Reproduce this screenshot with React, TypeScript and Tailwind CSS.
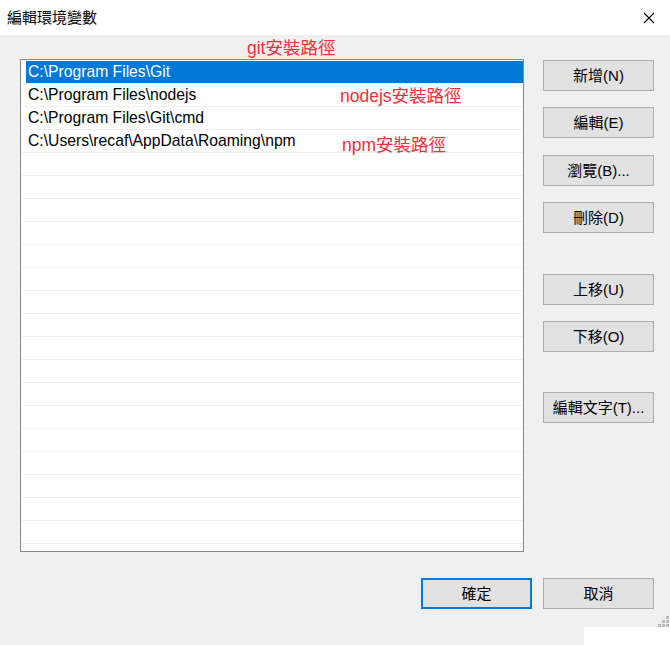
import React from "react";

const rows = [
  "C:\\Program Files\\Git",
  "C:\\Program Files\\nodejs",
  "C:\\Program Files\\Git\\cmd",
  "C:\\Users\\recaf\\AppData\\Roaming\\npm",
];

function Btn({
  label,
  className = "",
  primary = false,
}: {
  label: string;
  className?: string;
  primary?: boolean;
}) {
  return (
    <button
      className={
        (primary
          ? "border-2 border-[#0078d7] "
          : "border border-[#adadad] ") +
        "w-[111px] h-[31px] bg-[#e1e1e1] text-[15px] text-black flex items-center justify-center leading-none " +
        className
      }
    >
      {label}
    </button>
  );
}

export default function App() {
  const total = 21;
  return (
    <div className="relative w-[670px] h-[645px] bg-[#f0f0f0] flex flex-col font-['Liberation_Sans','Noto_Sans_CJK_TC',sans-serif] text-black overflow-hidden">
      {/* Title bar */}
      <div className="h-[35px] bg-white flex items-center justify-between pl-[7px] pr-[15px] shrink-0">
        <span className="text-[15px] leading-none">編輯環境變數</span>
        <svg width="12" height="12" viewBox="0 0 12 12" className="mt-[1px]">
          <path d="M1 1 L11 11 M11 1 L1 11" stroke="#000" strokeWidth="1.1" />
        </svg>
      </div>

      {/* Content */}
      <div className="flex pl-[20px] pt-[24px] shrink-0">
        <div className="w-[504px] h-[493px] bg-white border border-[#828790] pt-[1px] overflow-hidden">
          {Array.from({ length: total }).map((_, i) => (
            <div
              key={i}
              className="h-[23px] ml-[1px] border-b border-[#f0f0f0] flex"
            >
              {i === 0 ? (
                <div className="ml-[4px] flex-1 bg-[#0078d7] text-white text-[15.7px] pl-[2px] flex items-center leading-none">
                  {rows[i]}
                </div>
              ) : (
                <div className="ml-[4px] flex-1 text-[15.7px] pl-[2px] flex items-center leading-none">
                  {rows[i] ?? ""}
                </div>
              )}
            </div>
          ))}
        </div>

        <div className="ml-[19px] mt-[1px] flex flex-col">
          <Btn label="新增(N)" />
          <Btn label="編輯(E)" className="mt-[16px]" />
          <Btn label="瀏覽(B)..." className="mt-[17px]" />
          <Btn label="刪除(D)" className="mt-[16px]" />
          <Btn label="上移(U)" className="mt-[41px]" />
          <Btn label="下移(O)" className="mt-[16px]" />
          <Btn label="編輯文字(T)..." className="mt-[40px]" />
        </div>
      </div>

      {/* Bottom buttons */}
      <div className="flex justify-end gap-[11px] pr-[16px] mt-[26px] shrink-0">
        <Btn label="確定" primary />
        <Btn label="取消" />
      </div>

      {/* Grip area */}
      <div className="h-[18px] flex justify-end items-end pr-[1px] shrink-0">
        <svg width="11" height="11" viewBox="0 0 11 11">
          <rect x="8" y="0" width="3" height="3" fill="#bcbcbc" />
          <rect x="4" y="4" width="3" height="3" fill="#bcbcbc" />
          <rect x="8" y="4" width="3" height="3" fill="#bcbcbc" />
          <rect x="0" y="8" width="3" height="3" fill="#bcbcbc" />
          <rect x="4" y="8" width="3" height="3" fill="#bcbcbc" />
          <rect x="8" y="8" width="3" height="3" fill="#bcbcbc" />
        </svg>
      </div>

      {/* Bottom strip */}
      <div className="flex-1 flex">
        <div className="w-[584px] bg-[#f0f0f0]" />
        <div className="flex-1 bg-white" />
      </div>

      {/* Red annotations */}
      <span className="absolute left-[247px] top-[40px] text-[17.5px] leading-none text-[#ee2f3c]">
        git安裝路徑
      </span>
      <span className="absolute left-[340px] top-[88px] text-[17.5px] leading-none text-[#ee2f3c]">
        nodejs安裝路徑
      </span>
      <span className="absolute left-[342px] top-[137px] text-[17.5px] leading-none text-[#ee2f3c]">
        npm安裝路徑
      </span>
    </div>
  );
}
